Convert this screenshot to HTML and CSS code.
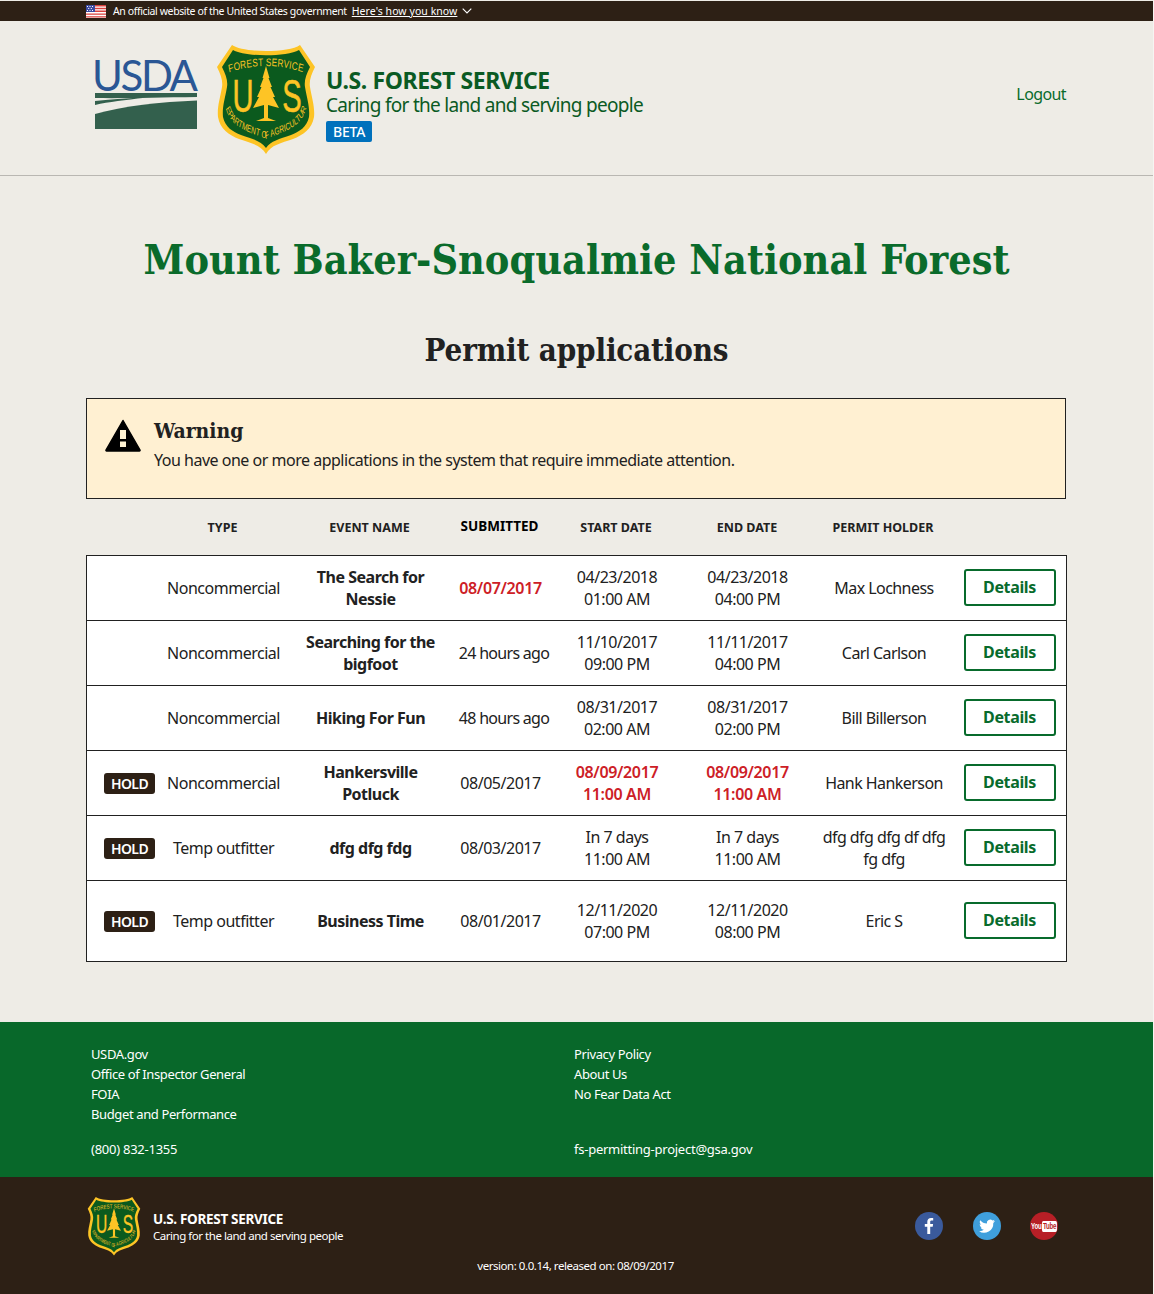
FILE: index.html
```html
<!DOCTYPE html>
<html lang="en">
<head>
<meta charset="utf-8">
<title>Permit applications</title>
<link rel="stylesheet" href="styles.css">
</head>
<body>
<svg class="defs" width="0" height="0" aria-hidden="true">
  <defs>
    <symbol id="shield" viewBox="0 0 98 110">
      <path d="M15 0 C26 8 72 8 83 0 L98 22 C94 30 92 36 93 42 C95 54 98 62 97 72 C95 84 86 90 76 94 C64 98 54 100 49 109 C44 100 34 98 22 94 C12 90 3 84 1 72 C0 62 3 54 5 42 C6 36 4 30 0 22 Z" fill="#fdc425"/>
      <path d="M16 5 C28 12 70 12 82 5 L93 22 C89 30 87 36 88 42 C90 54 93 62 92 72 C90 82 82 87 74 90 C62 94 54 96 49 103 C44 96 36 94 24 90 C16 87 8 82 6 72 C5 62 8 54 10 42 C11 36 9 30 5 22 Z" fill="#0b5a1e"/>
      <path id="arcTop" d="M-6 29 Q49 13 104 29" fill="none"/>
      <path id="arcBottom" d="M-14 60 C-8 84 26 87 49 94 C72 87 106 84 112 60" fill="none"/>
      <g transform="translate(49 0) scale(.75 1) translate(-49 0)">
        <text class="shield-text" font-size="11" letter-spacing=".3" fill="#fdc425"><textPath href="#arcTop" startOffset="50%" text-anchor="middle">FOREST SERVICE</textPath></text>
      </g>
      <g transform="translate(49 0) scale(.65 1) translate(-49 0)">
        <text class="shield-text" font-size="10" fill="#fdc425"><textPath href="#arcBottom" startOffset="50%" text-anchor="middle">DEPARTMENT OF AGRICULTURE</textPath></text>
      </g>
      <text class="shield-us" transform="translate(26 67) scale(.62 1)" font-size="47" fill="#fdc425" stroke="#fdc425" stroke-width=".6" text-anchor="middle">U</text>
      <text class="shield-us" transform="translate(75 67) scale(.62 1)" font-size="47" fill="#fdc425" stroke="#fdc425" stroke-width=".6" text-anchor="middle">S</text>
      <path d="M49 21 L52.500 33 L51.500 33 L55 42 L53.500 42 L58 52 L56 52 L62 63 L51 60 L51 73 L59 76 L39 76 L47 73 L47 60 L36 63 L42 52 L40 52 L44.500 42 L43 42 L46.500 33 L45.500 33 Z" fill="#fdc425"/>
    </symbol>
  </defs>
</svg>

<div class="gov-banner">
  <svg class="flag" viewBox="0 0 20 13" width="20" height="13" aria-hidden="true">
    <rect width="20" height="13" fill="#fff"/>
    <path d="M0 0h20v1.400H0zM0 2.800h20v1.400H0zM0 5.600h20V7H0zM0 8.400h20v1.400H0zM0 11.200h20v1.400H0z" fill="#d9403c"/>
    <rect width="9" height="7" fill="#3b4aa0"/>
    <path d="M1 1h1v1H1zM3.500 1h1v1h-1zM6 1h1v1H6zM2.200 3h1v1h-1zM4.800 3h1v1h-1zM1 5h1v1H1zM3.500 5h1v1h-1zM6 5h1v1H6z" fill="#fff"/>
  </svg>
  <span class="gov-text">An official website of the United States government</span>
  <a class="gov-link" href="#">Here's how you know</a>
  <svg class="chev" viewBox="0 0 10 6" width="10" height="6" aria-hidden="true"><path d="M.7.7 5 5 9.300.7" fill="none" stroke="#fff" stroke-width="1.100"/></svg>
</div>

<header class="site-header">
  <div class="brand">
    <div class="usda">
      <span class="usda-word">USDA</span>
      <svg class="usda-land" viewBox="0 0 102 37" width="102" height="37" aria-hidden="true">
        <path d="M0 0 L102 0 V4 C62 4.500 28 5.500 0 5 Z" fill="#33604d"/>
        <path d="M0 8 C18 6 34 5 50 4.800 C30 7 14 9 0 12 Z" fill="#33604d"/>
        <path d="M0 21 C28 13 66 9 102 7.500 V36 H0 Z" fill="#33604d"/>
      </svg>
    </div>
    <svg class="shield-lg" width="98" height="110" aria-hidden="true"><use href="#shield"/></svg>
    <div class="agency">
      <div class="agency-name">U.S. FOREST SERVICE</div>
      <div class="agency-tag">Caring for the land and serving people</div>
      <span class="beta">BETA</span>
    </div>
  </div>
  <a class="logout" href="#">Logout</a>
</header>

<main class="content">
  <h1 class="forest">Mount Baker-Snoqualmie National Forest</h1>
  <h2 class="page-title">Permit applications</h2>

  <section class="alert">
    <svg class="alert-icon" viewBox="0 0 36 33" width="36" height="33" aria-hidden="true">
      <path d="M18 1.500 L35 31 a.7.7 0 0 1-.6 1 H1.600 a.7.7 0 0 1-.6-1 Z" fill="#000" stroke="#000" stroke-width="1.500" stroke-linejoin="round"/>
      <rect x="15" y="11" width="6" height="9" fill="#fff3d4"/>
      <rect x="15" y="22.500" width="6" height="5.500" fill="#fff3d4"/>
    </svg>
    <div>
      <h3 class="alert-title">Warning</h3>
      <p class="alert-text">You have one or more applications in the system that require immediate attention.</p>
    </div>
  </section>

  <div class="table-head row-grid">
    <span></span>
    <span>TYPE</span>
    <span>EVENT NAME</span>
    <span class="head-active">SUBMITTED</span>
    <span>START DATE</span>
    <span class="head-end">END DATE</span>
    <span>PERMIT HOLDER</span>
    <span></span>
  </div>

  <div class="permits">
    <div class="permit row-grid">
      <span></span>
      <span>Noncommercial</span>
      <strong>The Search for Nessie</strong>
      <span class="alarm">08/07/2017</span>
      <span>04/23/2018<br>01:00 AM</span>
      <span>04/23/2018<br>04:00 PM</span>
      <span class="holder">Max Lochness</span>
      <a class="details" href="#">Details</a>
    </div>
    <div class="permit row-grid">
      <span></span>
      <span>Noncommercial</span>
      <strong>Searching for the bigfoot</strong>
      <span class="ago">24 hours ago</span>
      <span>11/10/2017<br>09:00 PM</span>
      <span>11/11/2017<br>04:00 PM</span>
      <span class="holder">Carl Carlson</span>
      <a class="details" href="#">Details</a>
    </div>
    <div class="permit row-grid">
      <span></span>
      <span>Noncommercial</span>
      <strong>Hiking For Fun</strong>
      <span class="ago">48 hours ago</span>
      <span>08/31/2017<br>02:00 AM</span>
      <span>08/31/2017<br>02:00 PM</span>
      <span class="holder">Bill Billerson</span>
      <a class="details" href="#">Details</a>
    </div>
    <div class="permit row-grid">
      <span class="hold">HOLD</span>
      <span>Noncommercial</span>
      <strong>Hankersville Potluck</strong>
      <span>08/05/2017</span>
      <span class="alarm">08/09/2017<br>11:00 AM</span>
      <span class="alarm">08/09/2017<br>11:00 AM</span>
      <span class="holder">Hank Hankerson</span>
      <a class="details" href="#">Details</a>
    </div>
    <div class="permit row-grid">
      <span class="hold">HOLD</span>
      <span>Temp outfitter</span>
      <strong>dfg dfg fdg</strong>
      <span>08/03/2017</span>
      <span>In 7 days<br>11:00 AM</span>
      <span>In 7 days<br>11:00 AM</span>
      <span class="holder">dfg dfg dfg df dfg fg dfg</span>
      <a class="details" href="#">Details</a>
    </div>
    <div class="permit row-grid permit-tall">
      <span class="hold">HOLD</span>
      <span>Temp outfitter</span>
      <strong>Business Time</strong>
      <span>08/01/2017</span>
      <span>12/11/2020<br>07:00 PM</span>
      <span>12/11/2020<br>08:00 PM</span>
      <span class="holder">Eric S</span>
      <a class="details" href="#">Details</a>
    </div>
  </div>
</main>

<footer>
  <div class="footer-links">
    <div class="foot-col">
      <a href="#">USDA.gov</a>
      <a href="#">Office of Inspector General</a>
      <a href="#">FOIA</a>
      <a href="#">Budget and Performance</a>
      <a class="foot-contact" href="#">(800) 832-1355</a>
    </div>
    <div class="foot-col">
      <a href="#">Privacy Policy</a>
      <a href="#">About Us</a>
      <a href="#">No Fear Data Act</a>
      <span class="foot-blank">&nbsp;</span>
      <a class="foot-contact" href="#">fs-permitting-project@gsa.gov</a>
    </div>
  </div>
  <div class="footer-base">
    <div class="base-row">
      <div class="base-brand">
        <svg class="shield-sm" width="54" height="59" aria-hidden="true"><use href="#shield"/></svg>
        <div class="base-copy">
          <div class="base-name">U.S. FOREST SERVICE</div>
          <div class="base-tag">Caring for the land and serving people</div>
        </div>
      </div>
      <div class="social">
        <a class="soc soc-fb" href="#" aria-label="Facebook">
          <svg viewBox="0 0 28 28" width="28" height="28" aria-hidden="true"><path d="M15.200 22v-7.200h2.500l.4-2.900h-2.900V10c0-.8.3-1.400 1.500-1.400h1.500V6c-.3 0-1.200-.1-2.200-.1-2.200 0-3.700 1.300-3.700 3.800v2.200h-2.500v2.900h2.500V22z" fill="#fff"/></svg>
        </a>
        <a class="soc soc-tw" href="#" aria-label="Twitter">
          <svg viewBox="0 0 28 28" width="28" height="28" aria-hidden="true"><path d="M22 9.100c-.6.3-1.200.4-1.900.5.7-.4 1.200-1 1.400-1.800-.6.4-1.300.6-2 .8a3.300 3.300 0 0 0-5.600 3C11.200 11.500 8.800 10.200 7.200 8.200c-.9 1.500-.4 3.400 1 4.400-.5 0-1-.2-1.500-.4 0 1.600 1.100 3 2.600 3.300-.5.100-1 .100-1.500 0 .4 1.300 1.600 2.200 3.100 2.300A6.600 6.600 0 0 1 6 19.200a9.300 9.300 0 0 0 14.300-8.300c.7-.5 1.200-1.100 1.700-1.800z" fill="#fff"/></svg>
        </a>
        <a class="soc soc-yt" href="#" aria-label="YouTube">
          <span class="yt-mark"><span class="yt-you">You</span><span class="yt-tube">Tube</span></span>
        </a>
      </div>
    </div>
    <div class="version">version: 0.0.14, released on: 08/09/2017</div>
  </div>
</footer>
</body>
</html>
```
FILE: styles.css
```css
* { box-sizing: border-box; }
html { background: #f6f5f2; }
html, body { margin: 0; padding: 0; }
body {
  background: #eeece6;
  color: #212121;
  font-family: "Noto Sans", "Open Sans", sans-serif;
  font-size: 16px;
  width: 1153px;
  padding-top: 1px;
}
a { color: inherit; text-decoration: none; }
.defs { position: absolute; }
.shield-text { font-family: "Liberation Sans", sans-serif; font-weight: 400; }
.shield-us { font-family: "Liberation Sans", sans-serif; font-weight: 400; }

.gov-banner {
  height: 20px;
  background: #2d2015;
  color: #fff;
  display: flex;
  align-items: center;
  padding-left: 86px;
  font-size: 10.5px;
}
.flag { margin-right: 7px; }
.gov-text { letter-spacing: -0.38px; margin-right: 5px; }
.gov-link { text-decoration: underline; letter-spacing: 0.06px; margin-right: 5px; }

.site-header {
  height: 155px;
  border-bottom: 1px solid #b9b7b2;
  display: flex;
  justify-content: space-between;
  padding: 23px 87px 0 94px;
}
.brand { display: flex; align-items: flex-start; }
.usda { width: 104px; margin-right: 19px; padding-top: 13px; }
.usda-word {
  display: block;
  font-family: "Lato", sans-serif;
  font-size: 42px;
  line-height: 36px;
  letter-spacing: -2.4px;
  color: #2a5795;
  margin-left: -2px;
}
.usda-land { display: block; margin-left: 1px; }
.shield-lg { margin-top: 1px; }
.agency { margin-left: 11px; padding-top: 23px; color: #0a5a23; }
.agency-name { font-size: 23px; font-weight: 700; line-height: 26px; letter-spacing: -0.4px; }
.agency-tag { font-size: 19px; line-height: 24px; letter-spacing: -0.7px; }
.beta {
  display: inline-block;
  margin-top: 4px;
  background: #0071bc;
  color: #fff;
  font-size: 14px;
  font-weight: 500;
  line-height: 21px;
  padding: 0 7px;
  border-radius: 2px;
  letter-spacing: -0.2px;
}
.logout { color: #086b2c; font-size: 16px; line-height: 22px; margin-top: 39px; letter-spacing: -0.6px; }

.content { padding: 0 86px; }
.forest {
  margin: 59px 0 0;
  text-align: center;
  font-family: "DejaVu Serif Condensed", "DejaVu Serif", serif;
  font-size: 41px;
  line-height: 50px;
  font-weight: 700;
  color: #0a6b2b;
}
.page-title {
  margin: 44px 0 0;
  text-align: center;
  font-family: "DejaVu Serif Condensed", "DejaVu Serif", serif;
  font-size: 31px;
  line-height: 42px;
  font-weight: 700;
  color: #212121;
  letter-spacing: -0.15px;
}
.alert {
  margin-top: 27px;
  width: 980px;
  height: 101px;
  border: 1px solid #212121;
  background: #fff0d2;
  display: flex;
  padding: 21px 0 0 18px;
}
.alert-icon { margin: -1px 13px 0 0; flex: none; }
.alert-title {
  margin: 0;
  font-family: "DejaVu Serif Condensed", "DejaVu Serif", serif;
  font-size: 21px;
  line-height: 22px;
  font-weight: 700;
}
.alert-text { margin: 6px 0 0; font-size: 16px; line-height: 24px; letter-spacing: -0.49px; }

.row-grid {
  display: grid;
  grid-template-columns: 68px 137px 157px 103px 130px 131px 142px 1fr;
  align-items: center;
  text-align: center;
}
.table-head {
  height: 56px;
  font-size: 12.5px;
  font-weight: 700;
  padding-right: 1px;
}
.head-active { color: #000; margin-top: -2px; font-size: 13.5px; }
.head-end { padding-left: 1px; }
.permits {
  border: 1px solid #212121;
  background: #fff;
  width: 981px;
}
.permit {
  height: 65px;
  border-bottom: 1px solid #212121;
  font-size: 16px;
  line-height: 22px;
  letter-spacing: -0.48px;
}
.permit-tall { height: 80px; border-bottom: 0; }
.permit strong { font-weight: 700; padding: 0 8px; letter-spacing: -0.5px; }
.holder { padding: 0 6px; letter-spacing: -0.56px; }
.ago { padding-left: 7px; letter-spacing: -0.7px; white-space: nowrap; }
.alarm { color: #cd2026; font-weight: 600; letter-spacing: -0.35px; }
.hold {
  justify-self: start;
  margin-left: 17px;
  width: 51px;
  height: 21px;
  background: #2d2015;
  color: #fff;
  border-radius: 3px;
  font-size: 14px;
  font-weight: 600;
  line-height: 21px;
  letter-spacing: -0.6px;
}
.details {
  justify-self: center;
  width: 92px;
  height: 37px;
  margin: -2px 0 0 -2px;
  border: 2px solid #086b2c;
  border-radius: 3px;
  color: #086b2c;
  font-weight: 700;
  font-size: 16px;
  line-height: 33px;
  letter-spacing: -0.35px;
  background: #fff;
}

footer { margin-top: 60px; }
.footer-links {
  background: #08682a;
  color: #fff;
  height: 155px;
  padding: 22px 0 0 91px;
  display: grid;
  grid-template-columns: 483px 1fr;
  font-size: 13px;
  line-height: 20px;
  letter-spacing: -0.38px;
}
.foot-col a, .foot-col span { display: block; }
.foot-contact { margin-top: 15px; letter-spacing: -0.25px; }
.footer-base {
  height: 117px;
  background: #2d2015;
  color: #fff;
  padding: 20px 95px 0 87px;
}
.base-row { display: flex; justify-content: space-between; align-items: flex-start; }
.base-brand { display: flex; align-items: center; gap: 12px; }
.base-copy { margin-top: 2px; }
.base-name { font-size: 13.5px; font-weight: 700; line-height: 17px; letter-spacing: -0.3px; }
.base-tag { font-size: 11.5px; line-height: 16px; letter-spacing: -0.47px; }
.social { display: flex; gap: 29.5px; margin-top: 15px; }
.soc {
  width: 28px;
  height: 28px;
  border-radius: 50%;
  display: flex;
  align-items: center;
  justify-content: center;
}
.soc-fb { background: #3a5a9c; }
.soc-tw { background: #3f9fdc; }
.soc-yt { background: #b71f26; font-family: "Liberation Sans", sans-serif; font-size: 9px; font-weight: 700; letter-spacing: -0.3px; overflow: hidden; }
.yt-mark { display: flex; align-items: center; flex: none; transform: scaleX(0.68); }
.yt-tube { background: #fff; color: #b71f26; border-radius: 2px; padding: 0 1px; line-height: 11px; margin-left: 1px; }
.version { text-align: center; font-size: 11.5px; line-height: 16px; margin-top: 2px; padding-left: 6px; letter-spacing: -0.45px; }
```
